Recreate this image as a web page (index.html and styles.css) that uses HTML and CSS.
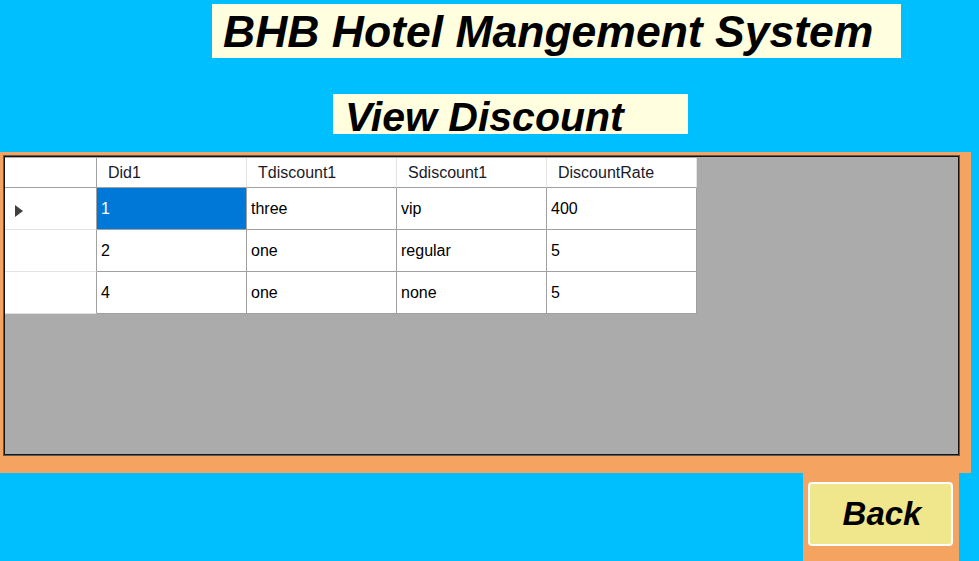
FILE: index.html
```html
<!DOCTYPE html>
<html>
<head>
<meta charset="utf-8">
<link rel="stylesheet" href="styles.css">
</head>
<body>
<div class="window">
  <div class="title">BHB Hotel Mangement System</div>
  <div class="subtitle">View Discount</div>
  <div class="panel">
    <div class="grid">
      <div class="table">
        <div class="corner"></div>
        <div class="colhead">Did1</div>
        <div class="colhead">Tdiscount1</div>
        <div class="colhead">Sdiscount1</div>
        <div class="colhead">DiscountRate</div>

        <div class="rowhead"><svg class="indicator" width="8" height="12" viewBox="0 0 8 12"><polygon points="0,0 8,6 0,12" fill="#404040"/></svg></div>
        <div class="cell selected">1</div>
        <div class="cell">three</div>
        <div class="cell">vip</div>
        <div class="cell">400</div>

        <div class="rowhead"></div>
        <div class="cell">2</div>
        <div class="cell">one</div>
        <div class="cell">regular</div>
        <div class="cell">5</div>

        <div class="rowhead"></div>
        <div class="cell">4</div>
        <div class="cell">one</div>
        <div class="cell">none</div>
        <div class="cell">5</div>
      </div>
    </div>
  </div>
  <div class="bottom">
    <div class="backwrap">
      <button class="back">Back</button>
    </div>
  </div>
</div>
</body>
</html>
```

FILE: styles.css
```css
* { box-sizing: border-box; }
html, body { margin: 0; padding: 0; }
body {
  background: #00BFFF;
  width: 979px;
  height: 561px;
  overflow: hidden;
  font-family: "Liberation Sans", Arial, sans-serif;
}
.window {
  display: flex;
  flex-direction: column;
  height: 561px;
}
.title {
  margin: 4px 0 0 212px;
  width: 689px;
  height: 54px;
  background: #FFFFE0;
  font-size: 44.5px;
  font-weight: bold;
  font-style: italic;
  line-height: 52px;
  padding-left: 11px;
  padding-top: 2px;
  color: #000;
  white-space: nowrap;
}
.subtitle {
  margin: 36px 0 0 333px;
  width: 355px;
  height: 40px;
  background: #FFFFE0;
  font-size: 41px;
  font-weight: bold;
  font-style: italic;
  line-height: 34px;
  padding: 6px 0 0 12px;
  color: #000;
  white-space: nowrap;
}
.panel {
  margin-top: 18px;
  width: 971px;
  height: 321px;
  background: #F4A460;
  padding: 3px 0 0 3px;
}
.grid {
  width: 957px;
  height: 301px;
  background: #ABABAB;
  border: 1px solid #5a5a5a;
  box-shadow: inset 0 0 0 1px #151515;
  padding: 2px 0 0 1px;
}
.table {
  display: grid;
  grid-template-columns: 92px 150px 150px 150px 150px;
  grid-template-rows: 30px 42px 42px 42px;
  width: 692px;
  font-size: 16px;
  color: #000;
}
.corner {
  background: #fff;
  border-right: 1px solid #A0A0A0;
  border-bottom: 1px solid #A0A0A0;
}
.colhead {
  background: #fff;
  border-right: 1px solid #E3E3E3;
  border-bottom: 1px solid #A0A0A0;
  display: flex;
  align-items: center;
  padding-left: 11px;
  color: #1a1a2a;
}
.rowhead {
  background: #fff;
  border-right: 1px solid #A0A0A0;
  border-bottom: 1px solid #E3E3E3;
  display: flex;
  align-items: center;
  padding-left: 10px;
}
.indicator { display: block; margin-top: 4px; }
.cell {
  background: #fff;
  border-right: 1px solid #A0A0A0;
  border-bottom: 1px solid #A0A0A0;
  display: flex;
  align-items: center;
  padding-left: 4px;
}
.cell.selected {
  background: #0078D7;
  color: #fff;
}
.bottom {
  flex: 1;
  display: flex;
}
.backwrap {
  margin-left: 803px;
  width: 156px;
  background: #F4A460;
  padding: 9px 0 0 5px;
}
.back {
  display: block;
  width: 145px;
  height: 64px;
  margin: 0;
  background: #F0E68C;
  border: 2px solid #fff;
  border-radius: 4px;
  font-family: "Liberation Sans", Arial, sans-serif;
  font-size: 33px;
  font-weight: bold;
  font-style: italic;
  color: #000;
  padding: 0;
  padding-left: 3px;
}
```
